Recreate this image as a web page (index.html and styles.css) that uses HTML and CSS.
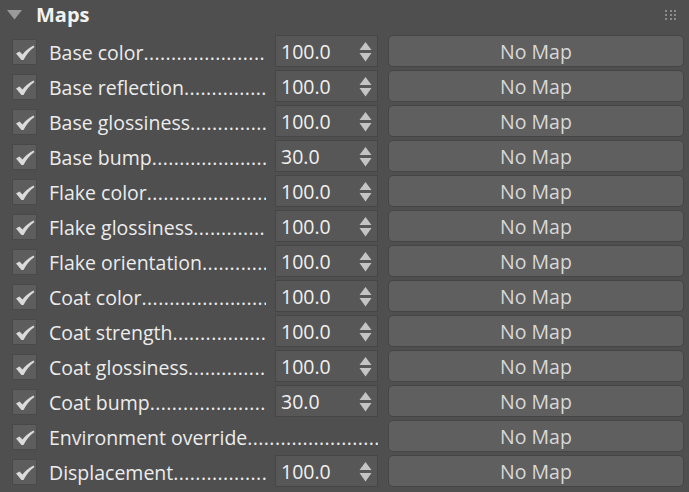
FILE: index.html
```html
<!DOCTYPE html>
<html>
<head>
<meta charset="utf-8">
<link rel="stylesheet" href="styles.css">
</head>
<body>
<div class="panel">
  <div class="header">
    <svg class="tri" width="16" height="10" viewBox="0 0 16 10"><polygon points="0,0 15,0 7.5,9.5" fill="#9a9a9a"/></svg>
    <span class="title">Maps</span>
    <span class="grip">
      <i></i><i></i><i></i><i></i><i></i><i></i><i></i><i></i><i></i>
    </span>
  </div>
  <div class="rows" id="rows"></div>
</div>
<script src="app.js"></script>
</body>
</html>
```
FILE: app.js
```js
const data = [
  ["Base color", "100.0"],
  ["Base reflection", "100.0"],
  ["Base glossiness", "100.0"],
  ["Base bump", "30.0"],
  ["Flake color", "100.0"],
  ["Flake glossiness", "100.0"],
  ["Flake orientation", "100.0"],
  ["Coat color", "100.0"],
  ["Coat strength", "100.0"],
  ["Coat glossiness", "100.0"],
  ["Coat bump", "30.0"],
  ["Environment override", null],
  ["Displacement", "100.0"]
];
const check = '<svg width="20" height="16" viewBox="0 0 20 16"><path d="M1 8.5 L4.5 6.5 L7.5 9.5 C10 6 13.5 3 18.5 0.5 L19.5 2 C15 5 11.5 9.5 8.5 15 L6.5 15 Z" fill="#dadada"/></svg>';
const arrows = '<span class="arrows"><svg width="13" height="20" viewBox="0 0 13 20"><polygon points="6.5,0 12.5,8 0.5,8" fill="#c4c4c4"/><polygon points="0.5,11 12.5,11 6.5,19.5" fill="#c4c4c4"/></svg></span>';
const rows = document.getElementById('rows');
rows.innerHTML = data.map(([label, val]) => {
  const labelCls = val === null ? 'label wide' : 'label';
  const spin = val === null ? '' : `<div class="spin"><span class="val">${val}</span>${arrows}</div>`;
  return `<div class="row"><div class="cb">${check}</div><div class="${labelCls}">${label}</div>${spin}<div class="btn">No Map</div></div>`;
}).join('');
```
FILE: styles.css
```css
html, body {
  margin: 0;
  padding: 0;
  background: #4f4f4f;
}
body {
  width: 689px;
  height: 492px;
  overflow: hidden;
  font-family: "Open Sans", "Noto Sans", sans-serif;
  color: #e8e8e8;
}
.panel {
  display: flex;
  flex-direction: column;
}
.header {
  height: 35px;
  display: flex;
  align-items: center;
  position: relative;
}
.tri {
  margin-left: 7px;
  margin-top: -5px;
}
.title {
  margin-left: 13px;
  margin-top: -6px;
  font-weight: 700;
  font-size: 20px;
  color: #f2f2f2;
}
.grip {
  position: absolute;
  left: 665px;
  top: 10px;
  width: 11px;
  display: grid;
  grid-template-columns: repeat(3, 2px);
  grid-auto-rows: 2px;
  gap: 2px 2.5px;
}
.grip i {
  background: #8c8c8c;
  display: block;
}
.rows {
  display: flex;
  flex-direction: column;
  gap: 3px;
}
.row {
  height: 32px;
  display: flex;
  align-items: center;
  padding-left: 12px;
}
.cb {
  width: 25px;
  height: 26px;
  box-sizing: border-box;
  background: #5d5d5d;
  border: 1px solid #494949;
  display: flex;
  align-items: center;
  justify-content: center;
  margin-top: 2px;
  flex: none;
}
.cb svg {
  margin-top: 2px;
}
.label {
  margin-left: 12px;
  width: 217px;
  flex: none;
  white-space: nowrap;
  overflow: hidden;
  font-size: 19.5px;
  line-height: 32px;
  padding-top: 2px;
  height: 32px;
  box-sizing: border-box;
  color: #ececec;
}
.label::after {
  content: "..............................................................................";
  letter-spacing: 0.4px;
}
.label.wide {
  width: 329px;
}
.spin {
  margin-left: 9px;
  width: 103px;
  height: 32px;
  box-sizing: border-box;
  background: #575757;
  border: 1px solid #464646;
  display: flex;
  align-items: center;
  padding-left: 5px;
  padding-right: 5px;
  flex: none;
}
.val {
  flex: 1;
  font-size: 19.5px;
  color: #f0f0f0;
}
.arrows {
  display: flex;
  margin-top: 1px;
}
.btn {
  margin-left: 10px;
  width: 296px;
  height: 32px;
  box-sizing: border-box;
  background: #5f5f5f;
  border: 1px solid #454545;
  border-radius: 5px;
  display: flex;
  align-items: center;
  justify-content: center;
  font-size: 19.5px;
  color: #d8d8d8;
  flex: none;
}
```
